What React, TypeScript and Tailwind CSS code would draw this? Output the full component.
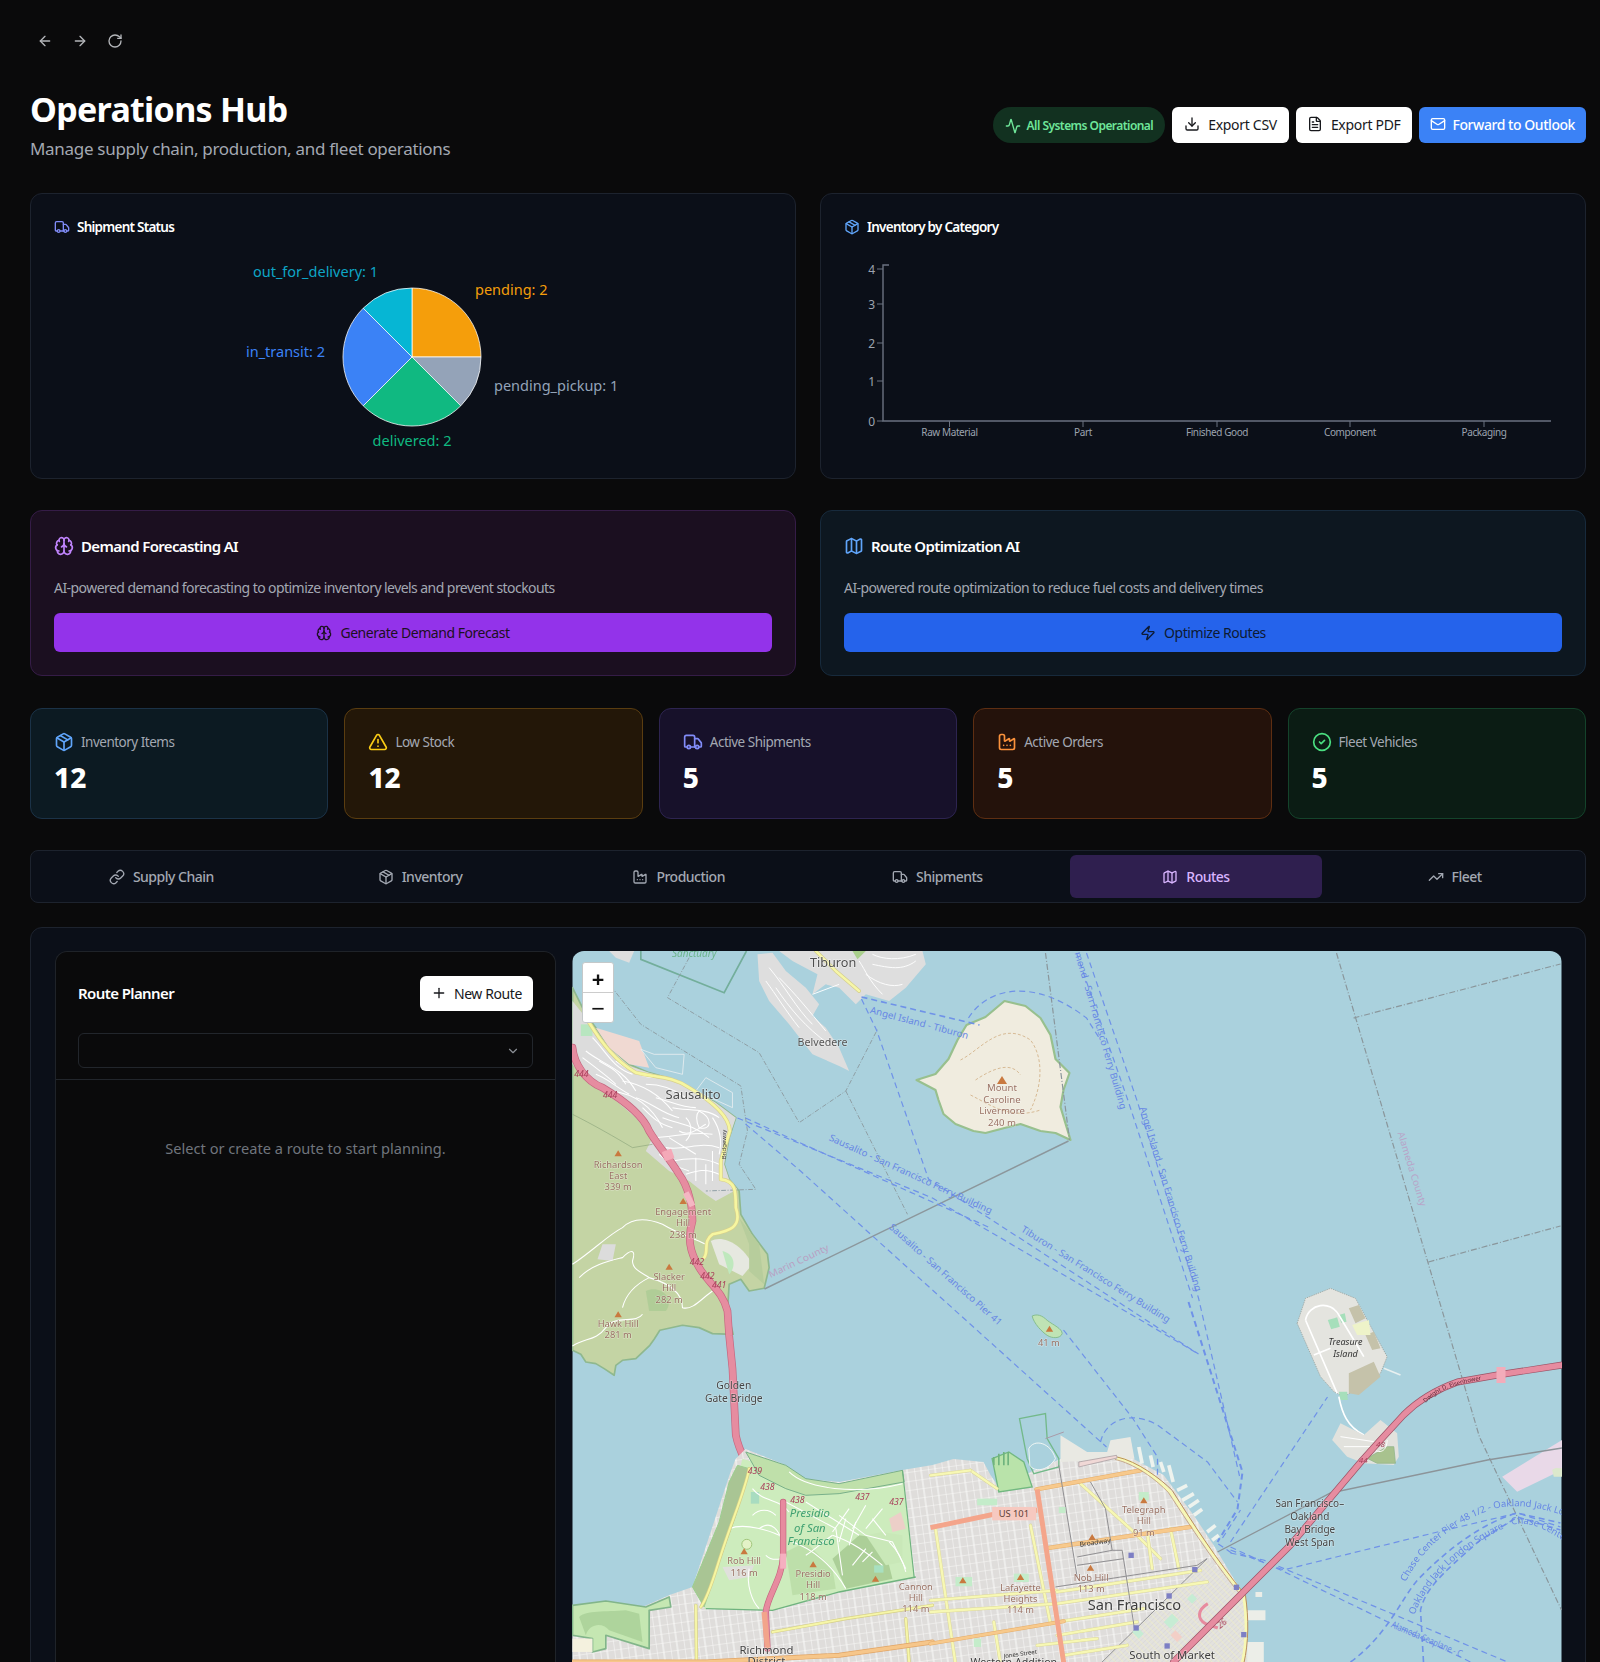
import type { ReactNode } from 'react';
import {
  Activity, ArrowLeft, ArrowRight, Brain, ChevronDown, CircleCheck, Download, Factory, FileText,
  Link as LinkIcon, Mail, Map as MapIcon, Package, Plus, RotateCw, TrendingUp, TriangleAlert, Truck, Zap,
} from 'lucide-react';

const Z7 = 'translate(572 951) scale(.3333)';
const Z8 = 'translate(572 1302) scale(.3333)';
const Z9 = 'translate(930 1302) scale(.3333)';
const Z10 = 'translate(1230 1260) scale(.3333)';

function Road({ d, w, color, casing, edge = 4 }: { d: string; w: number; color: string; casing?: string; edge?: number }) {
  return (
    <>
      {casing && <path d={d} fill="none" stroke={casing} strokeWidth={w + edge} strokeLinecap="round" strokeLinejoin="round" />}
      <path d={d} fill="none" stroke={color} strokeWidth={w} strokeLinecap="round" strokeLinejoin="round" />
    </>
  );
}

function Label({ x, y, s = 28, fill = '#9a7264', italic, lines, step = 34 }: { x: number; y: number; s?: number; fill?: string; italic?: boolean; lines: string[]; step?: number }) {
  return (
    <>
      {lines.map((t, i) => (
        <text key={t + i} x={x} y={y + i * step} fontSize={s} fill={fill} fontStyle={italic ? 'italic' : undefined} textAnchor="middle" stroke="rgba(255,255,255,.4)" strokeWidth={s / 9} paintOrder="stroke">
          {t}
        </text>
      ))}
    </>
  );
}

function Ferry({ x1, y1, x2, y2, children, color = '#6787e4' }: { x1: number; y1: number; x2: number; y2: number; children: string; color?: string }) {
  const angle = (Math.atan2(y2 - y1, x2 - x1) * 180) / Math.PI;
  const len = Math.hypot(x2 - x1, y2 - y1);
  return (
    <text x={x1} y={y1} transform={`rotate(${angle} ${x1} ${y1})`} fontSize="9.5" fill={color} textLength={len} lengthAdjust="spacingAndGlyphs">
      {children}
    </text>
  );
}

function Peak({ x, y }: { x: number; y: number }) {
  return <path d={`M${x - 11},${y + 9} L${x},${y - 9} L${x + 11},${y + 9} Z`} fill="#c9793f" />;
}

const marinStreets = [
  'M60,260 C100,300 120,350 180,370', 'M40,300 C90,340 150,350 190,420', 'M150,390 C210,400 260,430 300,480', 'M120,420 C190,430 240,470 270,530',
  'M300,470 C340,480 400,470 440,500', 'M270,500 C320,520 360,520 410,560', 'M240,560 C300,560 350,540 420,550', 'M280,590 C340,600 380,570 440,590',
  'M300,630 C350,620 400,620 440,640', 'M340,670 C370,660 400,650 440,670', 'M380,480 C420,500 420,540 380,530 C370,510 370,490 380,480', 'M220,400 C260,400 300,410 340,440',
  'M400,640 L400,700', 'M420,600 L420,690', 'M370,620 L370,690', 'M30,320 C70,350 110,380 130,400', 'M80,330 C110,350 130,350 160,400', 'M190,440 C230,450 270,490 320,500',
  'M250,440 C290,450 330,470 370,470', 'M210,470 C240,500 260,520 300,530', 'M320,540 C350,560 380,530 400,520', 'M260,610 C290,640 320,650 350,660', 'M290,560 C320,580 340,590 370,610',
  'M340,500 C360,520 360,550 340,570', 'M420,500 C440,530 450,570 440,610', 'M70,370 C100,380 120,400 170,430', 'M130,330 C170,360 210,380 250,380',
];
const hillTrails = [
  'M0,940 C60,900 110,850 150,830 C180,800 220,800 270,820 C320,850 360,860 400,880',
  'M20,980 C60,940 110,930 150,920 C180,890 190,900 180,930 C180,960 220,970 230,980 C190,1000 160,1030 150,1070',
  'M230,980 C300,1000 330,1030 330,1070 C360,1080 390,1040 420,1020',
  'M0,1185 C40,1160 70,1170 100,1130 C130,1090 190,1120 210,1090',
];
const presidioStreets = [
  'M540,560 C570,600 620,590 650,630', 'M560,680 C600,650 620,690 630,720', 'M640,600 L790,680 L810,820', 'M700,600 L860,700', 'M800,640 L880,700 L960,720 L1000,800',
  'M780,700 C840,720 880,750 930,790', 'M830,620 L780,690', 'M880,610 L840,680', 'M930,620 L880,680', 'M660,720 C720,740 780,790 820,860', 'M530,800 C520,850 540,900 560,920',
  'M580,760 C600,780 620,770 630,770', 'M470,680 C520,660 600,690 620,700', 'M650,510 C700,560 850,580 990,545', 'M820,650 L800,720', 'M850,660 L830,730', 'M900,650 L940,700',
  'M700,760 C730,740 750,720 780,700', 'M840,790 L880,740', 'M870,780 L900,750', 'M950,720 C970,740 990,770 1000,810', 'M540,640 C560,620 590,620 610,640',
];
const belvedereStreets = ['M590,50 C640,110 670,170 720,220', 'M610,110 C650,170 700,230 770,280', 'M620,80 C670,130 710,180 760,240', 'M580,90 C610,130 640,180 680,230', 'M720,130 L800,100', 'M900,40 C950,50 990,60 1030,30', 'M880,70 C920,100 960,110 990,100', 'M900,10 C930,25 980,30 1030,10', 'M860,30 C880,60 890,90 930,130'];

function MapArt() {
  return (
    <svg viewBox="572 951 989 711" className="block h-full w-full blur-[0.5px] font-['Noto_Sans']">
      <defs>
        <pattern id="citygrid" patternUnits="userSpaceOnUse" width="14" height="9" patternTransform="rotate(-8)">
          <rect width="14" height="9" fill="#dfdddb" />
          <path d="M0,0H14M0,0V9M7,0V9" stroke="#fafaf8" strokeWidth="1.1" />
        </pattern>
        <pattern id="somagrid" patternUnits="userSpaceOnUse" width="16" height="10" patternTransform="rotate(-44)">
          <rect width="16" height="10" fill="#dcdad8" />
          <path d="M0,0H16M0,5H16" stroke="#fbfbf0" strokeWidth="1.2" />
          <path d="M0,0V10" stroke="#f7f7b8" strokeWidth="2" />
        </pattern>
      </defs>
      <rect x="572" y="951" width="989" height="711" fill="#aad1dd" />

      {/* marin side */}
      <g transform={Z7}>
        <path d="M0,110 L40,190 L70,230 L110,290 L170,340 L230,365 L300,385 L370,420 L430,455 L490,500 L470,560 L455,640 L470,685 L500,720 L505,790 L540,850 L585,910 L590,950 L575,1012 L530,1020 L505,985 L470,1000 L465,1080 L482,1150 L420,1148 L380,1130 L330,1123 L262,1138 L245,1165 L232,1183 L190,1223 L150,1228 L130,1243 L125,1273 L95,1253 L70,1238 L40,1233 L25,1210 L0,1198 Z" fill="#c4d4a4" stroke="#8fb88e" strokeWidth="5" strokeLinejoin="round" />
        <path d="M0,150 L40,200 L110,290 L170,345 L230,365 L300,385 L370,420 L430,455 L490,500 L470,560 L455,640 L470,685 L495,715 L430,750 L400,730 L350,690 L290,660 L220,600 L240,560 L190,500 L120,440 L50,400 L0,340 Z" fill="#dcdcdc" />
        <path d="M70,230 L200,270 L230,350 L170,340 L110,290 Z" fill="#f0d9d2" />
        <path d="M25,220 h35 v35 h-35 Z" fill="#b8e6c0" />
        <path d="M205,295 L250,350 L330,370 L335,310 L245,310 Z" fill="#aad1dd" stroke="#e8eef0" strokeWidth="2.5" />
        <path d="M370,420 L400,380 L480,425 L480,470 Z" fill="#aad1dd" stroke="#e8eef0" strokeWidth="2.5" />
        <path d="M415,870 C450,850 510,880 540,940 L510,975 L440,940 Z" fill="#e6e8e0" />
        <path d="M450,900 C490,910 490,950 470,970 Z" fill="#bfe8bd" />
        <path d="M220,1020 C260,1000 310,1040 280,1080 L230,1080 Z" fill="#a8cb92" opacity=".7" />
        <path d="M90,880 L130,880 L120,930 L75,925 Z" fill="#dcdcdc" />
        <path d="M500,800 L560,880 L575,1000 L530,960 L530,880 Z" fill="#b7cd9c" />
        {marinStreets.map((d) => <path key={d} d={d} fill="none" stroke="#fff" strokeWidth="3.2" />)}
        {hillTrails.map((d) => <path key={d} d={d} fill="none" stroke="#fff" strokeWidth="3.2" />)}
        <path d="M0,490 C60,520 130,560 180,590 L240,580" fill="none" stroke="#87a077" strokeWidth="2.5" opacity=".7" />

        {/* belvedere and tiburon */}
        <path d="M555,10 L600,5 L640,60 L700,110 L740,160 L720,195 L760,230 L800,290 L830,360 L800,345 L720,310 L650,220 L590,150 L560,90 Z" fill="#dedede" />
        <path d="M620,0 L1050,0 L1060,40 L1000,110 L950,150 L880,130 L850,160 L800,110 L760,100 L720,130 L735,70 L660,30 Z" fill="#dedede" />
        <path d="M110,0 H185 L170,35 L130,20 Z" fill="#dedede" />
        <path d="M840,0 H880 L855,25 Z" fill="#a9cf8c" />
        {belvedereStreets.map((d) => <path key={d} d={d} fill="none" stroke="#fff" strokeWidth="2.8" />)}
        <Road d="M730,0 L790,60 L860,120" w={7} color="#f6f6a8" casing="#d4cd8d" />
        <path d="M205,0 L205,25 L455,125 L522,0" fill="none" stroke="#73ae9b" strokeWidth="5" />
        <path d="M350,20 L285,140 L560,305 L680,515 L820,420 L915,235 M820,420 L1005,790 M115,105 L205,220 L505,405 L525,540 L500,640 L550,715 L400,720" fill="none" stroke="#8f9fa5" strokeWidth="3" strokeDasharray="14 5 3 5" />

        <Road d="M50,215 C90,280 130,330 190,365 C250,380 300,375 350,410 C400,440 470,490 472,540 L445,630 L445,685 C490,690 490,720 490,770 C510,830 470,840 420,850 C390,870 410,900 395,920" w={8} color="#f6f6a0" casing="#d8d08c" />
        <Road d="M0,290 C5,340 40,390 90,410 C140,440 210,490 230,540 C260,590 290,620 320,670 C350,710 360,770 360,810 C345,860 350,900 380,950 C410,1000 450,1020 465,1080 L470,1153 L480,1253 L490,1453 C500,1500 530,1560 560,1583 C600,1615 640,1633 720,1658 C760,1668 800,1660 860,1638 C900,1622 940,1628 960,1638 C990,1660 1010,1700 1050,1725 L1090,1725" w={19} color="#e68ca0" casing="#c4667f" />
        <rect x="272" y="597" width="30" height="30" rx="3" fill="#f4a9b8" transform="rotate(-20 287 612)" />
        <path d="M340,725 L360,765" stroke="#f4b6c2" strokeWidth="18" />
      </g>

      {/* land around the presidio and the city */}
      <path d="M572,1662 L572,1605 L605,1602 L642,1607 L669,1595 L692,1587 L729,1475 L735,1459 L745,1449 L785,1465 L805,1479 L839,1482 L902,1470 L932,1465 L953,1459 L983,1462 L990,1475 L1000,1490 L1030,1472 L1060,1459 L1110,1452 L1117,1439 L1130,1439 L1133,1459 L1163,1475 L1193,1515 L1213,1545 L1243,1595 L1247,1662 Z" fill="url(#citygrid)" />
      <g transform={Z8}>
        <path d="M395,920 L430,780 L470,620 L510,470 L640,510 L720,560 L990,510 L1025,825 L800,870 L600,925 Z" fill="#cdecbd" />
        <path d="M360,855 L440,660 L470,540 L495,490 L530,500 L490,640 L440,780 L395,915 Z" fill="#a9c594" stroke="#9bcf8f" strokeWidth="3" />
        <path d="M520,450 L640,490 L700,530 L800,545 L990,505 L995,540 L800,575 L700,580 L640,560 L560,520 Z" fill="#bfe0aa" stroke="#78b08a" strokeWidth="3" />
        <path d="M780,770 L860,700 L930,710 L960,830 L820,860 Z" fill="#a6ca92" opacity=".85" />
        <path d="M640,750 L700,720 L780,800 L790,860 L660,880 Z" fill="#b9dca5" opacity=".8" />
        <path d="M880,700 L930,690 L990,700 L990,780 L940,790 Z" fill="#c9e8b8" />
        <path d="M950,650 L985,630 L1000,680 L960,690 Z" fill="#eccfc8" />
        <path d="M905,790 h28 v22 h-28 Z" fill="#a8e0c0" />
        <path d="M535,570 h25 v35 h-25 Z" fill="#a8dcc0" />
        <path d="M0,910 L100,897 L220,915 L290,885 L295,915 L230,925 L230,1040 L100,1000 L100,1040 L60,1050 L60,1010 L0,1000 Z" fill="#c5e7b2" stroke="#82b58a" strokeWidth="5" strokeLinejoin="round" />
        <path d="M20,945 C40,925 100,930 160,925 L200,935 L210,1020 L110,985 C90,960 50,965 40,1000 Z" fill="#a7cf96" opacity=".8" />
        <path d="M0,1010 H60 V1050 H0 Z" fill="#f4f1de" />
        <circle cx="523" cy="727" r="15" fill="#e3f2c7" stroke="#a1c57b" strokeWidth="3" />
        <path d="M450,795 L545,790 L530,825 L470,835 Z" fill="#e0e0dc" />
        {presidioStreets.map((d) => <path key={d} d={d} fill="none" stroke="#fff" strokeWidth="3.2" />)}
        <path d="M400,920 L600,925 L800,870 L1030,825" fill="none" stroke="#6fb37e" strokeWidth="4" />
        <path d="M990,505 L1025,825" fill="none" stroke="#6fb37e" strokeWidth="3.5" />
        <Road d="M530,500 C520,560 480,650 445,760 C425,820 410,880 385,915" w={6} color="#f6f6a0" casing="#d5cf88" />
        <Road d="M370,910 L372,1080" w={6} color="#f6f6a8" casing="#d5cf88" />
        <Road d="M600,990 L820,950 L1080,910" w={6} color="#f6f6a8" casing="#d5cf88" />
        <Road d="M1000,950 L1010,1080" w={6} color="#f6f6a8" casing="#d5cf88" />
        <Road d="M0,1080 L400,1080 L800,1060 L1080,1020" w={11} color="#f6c68a" casing="#e1a566" />
        <Road d="M632,600 L632,760 C630,830 585,880 580,930 L585,1040" w={15} color="#e78b9f" casing="#c4667f" />
        <path d="M632,755 L632,800" stroke="#f5b0c0" strokeWidth="18" />
        <path d="M575,930 L585,1040" stroke="#f2a48b" strokeWidth="16" />
      </g>
      <g transform={Z9}>
        {/* fort mason */}
        <path d="M185,470 L235,450 L280,480 L305,555 L205,570 Z" fill="#b9e3aa" stroke="#72b881" strokeWidth="4" />
        <path d="M190,465 L190,490 M205,455 L205,490 M220,450 L220,490 M233,450 L233,490" stroke="#6fb37e" strokeWidth="5" />
        <path d="M267,350 L345,335 L350,410 L385,470 L385,495 L310,515 L290,470 Z" fill="none" stroke="#73b98a" strokeWidth="4" />
        <path d="M295,440 C310,410 360,420 375,470 C350,510 310,510 298,490 Z" fill="#aad1dd" stroke="#f0f6f4" strokeWidth="3" />
        <path d="M345,410 L400,390" stroke="#a99aa8" strokeWidth="3" />
        <path d="M390,400 L470,450 L530,450 L540,415 L600,405 L612,470 L390,480 Z" fill="#e9e9e3" />
        {['M625,435 L635,485', 'M660,460 L668,495', 'M690,480 L700,510', 'M715,490 L728,540', 'M740,565 L770,550', 'M755,595 L790,575', 'M775,615 L805,595', 'M790,640 L815,622', 'M830,690 L855,670', 'M845,715 L865,700'].map((d) => <path key={d} d={d} stroke="#eef3ee" strokeWidth="11" />)}
        <path d="M950,925 H1005 V955 H950 Z M950,1020 H1000 V1080 H950 Z" fill="#eceee8" />
        <path d="M975,870 H995 V885 H975 Z" fill="#eceee8" />
        {/* SoMa */}
        <path d="M510,1085 L830,770 L945,880 L950,1085 Z" fill="url(#somagrid)" />
        <path d="M510,1085 L830,770" stroke="#8f8f92" strokeWidth="3" />
        <path d="M700,960 l25,-25 l20,20 l-25,25 Z M620,975 l20,20 l-15,15 l-20,-20 Z M770,890 l15,-15 l15,15 l-15,15 Z" fill="#c6ecd4" />
        <path d="M720,1000 l15,-15 l20,20 l-15,15 Z" fill="#f3cfc7" />

        {/* yellow streets */}
        {['M15,680 L75,1085', 'M300,670 L360,965', 'M120,505 L200,560', 'M0,520 L120,505', 'M450,545 L610,690 L690,770', 'M0,895 L380,865', 'M0,930 L380,905', 'M380,870 L810,805', 'M380,905 L830,840', 'M190,960 L210,1085', 'M380,960 L640,920', 'M380,1000 L620,960', 'M650,690 L665,800', 'M720,680 L745,800', 'M320,1030 L500,1010', 'M400,1060 L590,1030'].map((d) => (
          <Road key={d} d={d} w={7} color="#f7f8b4" casing="#dcd79b" edge={3} />
        ))}
        {/* orange streets */}
        <Road d="M318,562 L630,505" w={10} color="#f7c98c" casing="#e4ac69" edge={3} />
        <Road d="M355,738 L780,675" w={10} color="#f7c98c" casing="#e4ac69" edge={3} />
        <Road d="M0,1025 L340,968 L400,958" w={9} color="#f7c98c" casing="#e4ac69" edge={3} />
        {/* van ness and lombard */}
        <path d="M320,562 L400,1085" stroke="#f4a58b" strokeWidth="15" fill="none" />
        <path d="M0,677 L190,637 L320,625" stroke="#f4a58b" strokeWidth="15" fill="none" />
        <rect x="185" y="615" width="132" height="40" fill="#f6c9c0" />
        <text x="250" y="645" fontSize="28" fill="#5d4037" textAnchor="middle">US 101</text>

        {/* embarcadero */}
        <path d="M560,468 C620,480 680,530 720,570 C780,660 850,770 940,880 C950,950 950,1020 935,1085" fill="none" stroke="#f7f8b4" strokeWidth="9" />
        <path d="M560,465 C620,478 690,530 725,565 C785,660 855,770 945,880 C955,950 955,1020 940,1085" fill="none" stroke="#b98f5b" strokeWidth="3" />
        <path d="M553,472 C615,486 680,535 714,572 C775,665 845,775 934,884" fill="none" stroke="#b98f5b" strokeWidth="2" />
        <path d="M445,480 L445,495 L560,468 L558,460 Z" fill="#f0d8d6" stroke="#9d9297" strokeWidth="2" />

        {/* trams */}
        <path d="M385,490 L440,825 M480,540 L525,620 L545,745 L440,765 M575,745 L612,980 M545,745 H575 M375,855 L800,790 L830,770 M440,790 L580,770" fill="none" stroke="#908f92" strokeWidth="3" />

        {['M140,610 h60 v-20 h-60 Z', 'M625,570 h30 v25 h-30 Z', 'M75,825 h50 v28 h-50 Z', 'M250,815 h45 v25 h-45 Z', 'M130,1010 h22 v25 h-22 Z', 'M385,615 h20 v18 h-20 Z'].map((d) => <path key={d} d={d} fill="#c4ecca" />)}
        {[[602, 760], [793, 803], [918, 856], [716, 882], [617, 978], [710, 1032], [940, 998]].map(([x, y]) => (
          <rect key={x} x={x - 8} y={y - 8} width="16" height="16" fill="#7d7fc4" />
        ))}

        {/* bay bridge ramp */}
        <path d="M832,905 C800,925 800,950 825,965 L862,978" fill="none" stroke="#e78b9f" strokeWidth="9" />
        {[[640, 595], [485, 705], [480, 797], [270, 825], [97, 835], [-165, 830]].map(([x, y]) => <Peak key={x} x={x} y={y} />)}
      </g>

      {/* alcatraz */}
      <g transform={Z9}>
        <path d="M305,42 C320,35 335,40 350,55 C370,70 395,80 395,95 C390,110 365,110 350,100 C335,90 310,65 305,42 Z" fill="#bfe3b4" stroke="#86bd8f" strokeWidth="3" />
        <Peak x={357} y={80} />
      </g>

      {/* angel island */}
      <path d="M916,1080 L935,1074 L948,1059 L957,1040 L966,1025 L985,1017 L1004,1001 L1025,1006 L1040,1018 L1050,1035 L1055,1059 L1069,1073 L1063,1090 L1060,1107 L1070,1140 L1055,1133 L1040,1131 L1020,1124 L1004,1128 L985,1133 L973,1131 L955,1124 L943,1114 L938,1100 L935,1090 Z" fill="#f0ecdf" stroke="#98c08e" strokeWidth="2.2" strokeLinejoin="round" />
      <path d="M960,1060 C980,1050 1000,1020 1030,1040 C1045,1060 1040,1090 1030,1110 M970,1095 C990,1105 1010,1120 1040,1110 M975,1080 C990,1070 1010,1060 1020,1075" fill="none" stroke="#d4b48c" strokeWidth=".9" strokeDasharray="3 2" />
      <path d="M996.5,1084 L1001.5,1076 L1006.5,1084 Z" fill="#c9793f" />

      {/* treasure island and yerba buena */}
      <g transform={Z10}>
        <path d="M200,190 L225,115 L300,85 L375,115 L470,290 L450,340 L410,370 L340,410 L310,395 L270,350 Z" fill="#e4e4df" stroke="#9aa29e" strokeWidth="2.5" strokeDasharray="4 3" />
        <path d="M355,145 L385,135 L405,175 L375,190 Z M405,225 L430,215 L450,265 L425,270 Z M355,340 L430,305 L450,350 L385,405 L355,400 Z" fill="#c5c2aa" />
        <path d="M292,180 L320,172 L328,200 L302,208 Z M325,165 L343,160 L348,185 L332,188 Z M325,395 L350,395 L352,420 L330,420 Z" fill="#a6dfbb" />
        <path d="M365,195 L415,180 L420,225 L380,225 Z" fill="#eef3c9" />
        <path d="M225,180 C235,130 300,120 325,165 L400,290 M225,180 L320,400 M250,285 L300,265 M325,410 C335,460 350,500 400,525" fill="none" stroke="#fff" strokeWidth="5" />
        <path d="M460,325 L510,345" stroke="#e8f0f0" strokeWidth="5" />
        <path d="M305,540 L330,490 L400,525 L450,480 L500,520 L505,590 L490,615 L400,610 L350,590 Z" fill="#e2e2dd" />
        <path d="M410,595 L470,560 L490,560 L495,610 L440,610 Z" fill="#a8c28e" stroke="#8ab085" strokeWidth="2" />
        <path d="M330,530 L430,545 M340,560 L420,560 M430,570 C460,585 470,560 470,540" fill="none" stroke="#fff" strokeWidth="3" />
        <path d="M815,650 L995,540 L995,630 L860,695 Z" fill="#e9d9e8" />
        <path d="M965,630 C975,620 985,625 995,625 V650 H970 Z" fill="#dce8cc" />
      </g>

      {/* boundaries */}
      <path d="M1045,953 L1069,1140 M1336,953 L1479,1437 L1561,1610 M1353,1018 L1560,964 M1428,1262 L1560,1226" fill="none" stroke="#8a969b" strokeWidth="1.2" strokeDasharray="6 2 1 2" />
      <path d="M1217,1552 L1330,1493 L1487,1460 L1562,1448" fill="none" stroke="#8c9499" strokeWidth="1.4" />
      <path d="M764,1289 L1068,1141" fill="none" stroke="#8c979c" strokeWidth="1.4" />

      {/* ferries */}
      <g fill="none" stroke="#6f92e8" strokeWidth="1.2" strokeDasharray="6 4">
        <path d="M861,997 L979,1025" strokeWidth="1.6" />
        <path d="M968,1018 C985,990 1030,975 1086,1018 L1100,1040" />
        <path d="M861,999 L876,1030 L928,1179 L1198,1354" />
        <path d="M1086,953 L1137,1102 L1198,1298 L1239,1476" />
        <path d="M1076,953 L1128,1102 L1192,1298" />
        <path d="M737,1118 L932,1198 L1198,1354" />
        <path d="M745,1124 L800,1171 L1106,1447" />
        <path d="M745,1118 L800,1143 L990,1228" />
        <path d="M1063,1330 L1132,1418 L1157,1457 L1157,1475" />
        <path d="M1100,1442 C1105,1420 1130,1410 1157,1425 L1207,1462 L1237,1502" />
        <path d="M1188,1302 L1207,1362 L1242,1472 L1237,1509 L1217,1542" strokeWidth="2" />
        <path d="M1230,1542 L1327,1397" />
        <path d="M1222,1538 L1240,1510" />
        <path d="M1230,1550 L1283,1570 L1437,1532 L1517,1513 L1560,1527" />
        <path d="M1350,1662 C1387,1635 1400,1600 1417,1580 C1443,1553 1480,1523 1517,1513 L1560,1523" strokeWidth="1.6" />
        <path d="M1423,1662 L1420,1610 C1425,1590 1437,1577 1480,1540 L1517,1517 L1560,1530" strokeWidth="1.6" />
        <path d="M1230,1553 L1263,1560 L1507,1662" />
        <path d="M1230,1547 L1280,1570 L1470,1662" />
        <path d="M1231,1553 L1215,1542" />
      </g>

      <Ferry x1={869} y1={1013} x2={967} y2={1039}>Angel Island - Tiburon</Ferry>
      <Ferry x1={1074} y1={953} x2={1120} y2={1110}>mond - San Francisco Ferry Building</Ferry>
      <Ferry x1={1139} y1={1108} x2={1195} y2={1292}>Angel Island - San Francisco Ferry Building</Ferry>
      <Ferry x1={828} y1={1140} x2={990} y2={1214}>Sausalito - San Francisco Ferry Building</Ferry>
      <Ferry x1={1020} y1={1231} x2={1167} y2={1323}>Tiburon - San Francisco Ferry Building</Ferry>
      <Ferry x1={888} y1={1228} x2={998} y2={1326}>Sausalito - San Francisco Pier 41</Ferry>
      <Ferry x1={1397} y1={1133} x2={1420} y2={1207} color="#b8a4c8">Alameda County</Ferry>
      <Ferry x1={770} y1={1278} x2={829} y2={1250} color="#b99fc2">Marin County</Ferry>
      <Ferry x1={1390} y1={1627} x2={1460} y2={1657}>Alameda Seaplane - C</Ferry>
      <path id="chaseA" d="M1405,1582 C1425,1545 1450,1525 1490,1510 C1515,1502 1540,1508 1562,1515" fill="none" />
      <path id="chaseB" d="M1414,1615 C1425,1585 1455,1550 1510,1525 C1530,1520 1545,1530 1562,1540" fill="none" />
      <text fontSize="9.5" fill="#6787e4"><textPath href="#chaseA">Chase Center Pier 48 1/2 - Oakland Jack London</textPath></text>
      <text fontSize="9.5" fill="#6787e4"><textPath href="#chaseB">Oakland Jack London Square - Chase Center</textPath></text>

      {/* bay bridge */}
      <Road d="M1173,1662 L1290,1545 L1362,1460 L1380,1440 L1403,1415 C1420,1398 1440,1388 1457,1382 L1497,1375 L1562,1365" w={5.5} color="#e68ca0" casing="#9b5366" edge={1.4} />
      <rect x="1496" y="1367" width="9" height="16" fill="#f2acba" />
      <path id="dde" d="M1425,1403 C1440,1388 1455,1384 1497,1377" fill="none" />
      <text fontSize="6" fill="#5e2a39"><textPath href="#dde">Dwight D. Eisenhower</textPath></text>

      {/* labels */}
      <g transform={Z7}>
        <text x="365" y="18" fontSize="30" fontStyle="italic" fill="#6db58d" textAnchor="middle">Sanctuary</text>
        <Label x={782} y={47} s={38} fill="#4e4e4e" lines={['Tiburon']} />
        <Label x={750} y={286} s={32} fill="#555" lines={['Belvedere']} />
        <Label x={362} y={445} s={39} fill="#4e4e4e" lines={['Sausalito']} />
        <Peak x={137} y={607} />
        <Peak x={332} y={750} />
        <Peak x={290} y={947} />
        <Peak x={137} y={1090} />
        <Label x={137} y={650} lines={['Richardson', 'East', '339 m']} />
        <Label x={332} y={792} lines={['Engagement', 'Hill', '238 m']} />
        <Label x={290} y={987} lines={['Slacker', 'Hill', '282 m']} />
        <Label x={137} y={1127} lines={['Hawk Hill', '281 m']} />
        {[[27, 378, '444'], [113, 442, '444'], [373, 943, '442'], [405, 985, '442'], [440, 1010, '441']].map(([x, y, t]) => (
          <text key={`${x}`} x={x} y={y} fontSize="26" fontStyle="italic" fill="#a83f5a" textAnchor="middle">{t}</text>
        ))}
        <text x="462" y="625" fontSize="18" fill="#444" transform="rotate(-90 462 625)">Bridgeway</text>
      </g>
      <g transform={Z8}>
        <Label x={484} y={262} s={31} fill="#444" lines={['Golden', 'Gate Bridge']} step={38} />
        <Peak x={515} y={748} />
        <Peak x={722} y={787} />
        <Label x={515} y={787} lines={['Rob Hill', '116 m']} />
        <Label x={722} y={825} lines={['Presidio', 'Hill', '118 m']} />
        <Label x={1030} y={865} lines={['Cannon', 'Hill', '114 m']} step={33} />
        <text fontSize="34" fontStyle="italic" fill="#3fa071" textAnchor="middle">
          <tspan x="712" y="645">Presidio</tspan>
          <tspan x="712" y="690">of San</tspan>
          <tspan x="716" y="730">Francisco</tspan>
        </text>
        {[[547, 517, '439'], [585, 565, '438'], [675, 602, '438'], [870, 595, '437'], [972, 608, '437']].map(([x, y, t]) => (
          <text key={`${x}`} x={x} y={y} fontSize="26" fontStyle="italic" fill="#a83f5a" textAnchor="middle">{t}</text>
        ))}
        <Label x={582} y={1055} s={34} fill="#444" lines={['Richmond', 'District']} step={34} />
      </g>
      <g transform={Z9}>
        <Label x={355} y={131} lines={['41 m']} />
        <Label x={640} y={633} lines={['Telegraph', 'Hill', '91 m']} />
        <Label x={270} y={866} lines={['Lafayette', 'Heights', '114 m']} />
        <Label x={482} y={836} lines={['Nob Hill', '113 m']} />
        <Label x={612} y={925} s={44} fill="#3d3d3d" lines={['San Francisco']} />
        <Label x={725} y={1070} s={34} fill="#3d3d3d" lines={['South of Market']} />
        <Label x={250} y={1092} s={32} fill="#3d3d3d" lines={['Western Addition']} />
        <text x="495" y="728" fontSize="20" fill="#333" textAnchor="middle" transform="rotate(-8 495 728)">Broadway</text>
        <text x="270" y="1062" fontSize="18" fill="#333" textAnchor="middle" transform="rotate(-8 270 1062)">Jones Street</text>
        <text x="880" y="972" fontSize="26" fontStyle="italic" fill="#a83f5a" textAnchor="middle" transform="rotate(-40 880 972)">26</text>
      </g>
      <g transform={Z10}>
        <Label x={238} y={740} s={30} fill="#444" lines={['San Francisco–', 'Oakland', 'Bay Bridge', 'West Span']} step={39} />
        <text fontSize="27" fontStyle="italic" fill="#333" textAnchor="middle">
          <tspan x="345" y="255">Treasure</tspan>
          <tspan x="345" y="290">Island</tspan>
        </text>
        <text x="450" y="560" fontSize="24" fontStyle="italic" fill="#a83f5a" textAnchor="middle">48</text>
        <text x="398" y="608" fontSize="24" fontStyle="italic" fill="#a83f5a" textAnchor="middle">44</text>
      </g>
      <Label x={1001.5} y={1091} s={9.6} lines={['Mount', 'Caroline', 'Livermore', '240 m']} step={11.7} />
    </svg>
  );
}

function ChartCard({ icon, title, children }: { icon: ReactNode; title: string; children: ReactNode }) {
  return (
    <div className="h-[286px] rounded-xl border border-[#1d232e] bg-[#0b0f18] px-[23px] pt-[23px] pb-6">
      <h3 className="flex h-[20px] items-center gap-[7px] text-[13.5px] font-semibold tracking-[-0.75px] text-white">
        {icon}
        {title}
      </h3>
      <div className="mt-[13px]">{children}</div>
    </div>
  );
}

function AiCard({ icon, title, text, cls, button }: { icon: ReactNode; title: string; text: string; cls: string; button: ReactNode }) {
  return (
    <div className={`h-[166px] rounded-xl border px-[23px] pt-[22px] pb-6 ${cls}`}>
      <h3 className="flex h-[26px] items-center gap-[7px] text-[15px] font-semibold tracking-[-0.65px] text-white">
        {icon}
        {title}
      </h3>
      <p className="mt-[19px] text-[14px] leading-[20px] tracking-[-0.56px] text-[#a3a8b2]">{text}</p>
      <div className="mt-[15px]">{button}</div>
    </div>
  );
}

function StatCard({ icon, label, value, cls }: { icon: ReactNode; label: string; value: string; cls: string }) {
  return (
    <div className={`h-[111px] rounded-xl border px-[23px] pt-[23px] ${cls}`}>
      <div className="flex h-[20px] items-center gap-[7px] text-[13.5px] tracking-[-0.5px] text-[#a3a8b2]">
        {icon}
        {label}
      </div>
      <p className="mt-[7px] text-[28px] leading-[36px] font-extrabold text-white">{value}</p>
    </div>
  );
}

function Tab({ icon, label, active }: { icon: ReactNode; label: string; active?: boolean }) {
  return (
    <div className={`flex h-[43px] items-center justify-center gap-2 rounded-md text-[14px] font-medium tracking-[-0.5px] ${active ? 'bg-[#2f1f4f] text-[#d8b4fe]' : 'text-[#a3a8b2]'}`}>
      {icon}
      {label}
    </div>
  );
}

function ShipmentPie() {
  return (
    <svg viewBox="54 250 718 205" className="block h-[205px] w-full font-['Noto_Sans'] text-[14.5px]">
      <path d="M412,357 L412,288 A69,69 0 0 1 481,357 Z" fill="#f59e0b" stroke="#fff" strokeOpacity=".75" />
      <path d="M412,357 L481,357 A69,69 0 0 1 460.8,405.8 Z" fill="#94a3b8" stroke="#fff" strokeOpacity=".75" />
      <path d="M412,357 L460.8,405.8 A69,69 0 0 1 363.2,405.8 Z" fill="#10b981" stroke="#fff" strokeOpacity=".75" />
      <path d="M412,357 L363.2,405.8 A69,69 0 0 1 363.2,308.2 Z" fill="#3b82f6" stroke="#fff" strokeOpacity=".75" />
      <path d="M412,357 L363.2,308.2 A69,69 0 0 1 412,288 Z" fill="#06b6d4" stroke="#fff" strokeOpacity=".75" />
      <text x="378" y="277" textAnchor="end" fill="#0ea5c6">out_for_delivery: 1</text>
      <text x="475" y="295" fill="#f59e0b">pending: 2</text>
      <text x="494" y="391" fill="#94a3b8">pending_pickup: 1</text>
      <text x="412" y="446" textAnchor="middle" fill="#10b981">delivered: 2</text>
      <text x="325" y="357" textAnchor="end" fill="#3b82f6">in_transit: 2</text>
    </svg>
  );
}

function InventoryBars() {
  const yTicks = [[4, 269], [3, 304], [2, 343], [1, 381], [0, 421]] as const;
  const xTicks = [['Raw Material', 949.5], ['Part', 1083], ['Finished Good', 1217], ['Component', 1350], ['Packaging', 1484]] as const;
  return (
    <svg viewBox="844 250 718 205" className="block h-[205px] w-full font-['Noto_Sans']">
      <path d="M889,265 H883 V421 H1551" fill="none" stroke="#6b7280" strokeWidth="1.4" />
      {yTicks.map(([v, y]) => (
        <g key={v}>
          <path d={`M877,${y} H883`} stroke="#6b7280" />
          <text x="875" y={y + 5} textAnchor="end" fontSize="12" fill="#9ca3af">{v}</text>
        </g>
      ))}
      {xTicks.map(([t, x]) => (
        <g key={t}>
          <path d={`M${x},421 V427`} stroke="#6b7280" />
          <text x={x} y="436" textAnchor="middle" fontSize="10" letterSpacing="-0.4" fill="#9ca3af">{t}</text>
        </g>
      ))}
    </svg>
  );
}

export default function App() {
  return (
    <div className="h-[1662px] overflow-hidden bg-[#0a0a0b] pt-[33px] pr-[14px] pl-[30px] font-['Noto_Sans',sans-serif] text-white">
      <div className="flex h-[16px] items-center gap-[19px] pl-[7px] text-[#b4b6ba]">
        <ArrowLeft size={16} />
        <ArrowRight size={16} />
        <RotateCw size={16} />
      </div>

      <header className="mt-[38px] flex h-[85px] items-start justify-between">
        <div>
          <h1 className="text-[34px] leading-[44px] font-bold tracking-[-0.7px] text-white">Operations Hub</h1>
          <p className="mt-[6px] text-[17px] leading-[24px] tracking-[-0.3px] text-[#a3a8b2]">Manage supply chain, production, and fleet operations</p>
        </div>
        <div className="mt-[20px] flex items-center gap-[7px]">
          <span className="flex h-[36px] items-center gap-1.5 rounded-full bg-[#123120] px-[12px] pt-[2px] text-[12px] font-semibold tracking-[-0.55px] text-[#6fe69a]">
            <Activity size={16} />
            All Systems Operational
          </span>
          <button className="flex h-[36px] items-center gap-2 rounded-md bg-white px-[12px] pb-[2px] text-[14px] tracking-[-0.3px] text-[#17181c]">
            <Download size={16} />
            Export CSV
          </button>
          <button className="flex h-[36px] items-center gap-2 rounded-md bg-white px-[11px] pb-[2px] text-[14px] tracking-[-0.3px] text-[#17181c]">
            <FileText size={16} />
            Export PDF
          </button>
          <button className="flex h-[36px] items-center gap-[7px] rounded-md bg-[#3b82f6] px-[11px] pb-[2px] text-[14px] font-medium tracking-[-0.45px] text-white">
            <Mail size={16} />
            Forward to Outlook
          </button>
        </div>
      </header>

      <div className="mt-[21px] grid grid-cols-2 gap-6">
        <ChartCard icon={<Truck size={16} className="text-[#818cf8]" />} title="Shipment Status">
          <ShipmentPie />
        </ChartCard>
        <ChartCard icon={<Package size={16} className="text-[#60a5fa]" />} title="Inventory by Category">
          <InventoryBars />
        </ChartCard>
      </div>

      <div className="mt-[31px] grid grid-cols-2 gap-6">
        <AiCard
          cls="border-[#351c47] bg-[#1b0f20]"
          icon={<Brain size={20} className="text-[#c084fc]" />}
          title="Demand Forecasting AI"
          text="AI-powered demand forecasting to optimize inventory levels and prevent stockouts"
          button={
            <button className="flex h-[39px] w-full items-center justify-center gap-2 rounded-md bg-[#9333ea] text-[14px] tracking-[-0.45px] text-[#1c1022]">
              <Brain size={16} />
              Generate Demand Forecast
            </button>
          }
        />
        <AiCard
          cls="border-[#172a3c] bg-[#0d1720]"
          icon={<MapIcon size={20} className="text-[#60a5fa]" />}
          title="Route Optimization AI"
          text="AI-powered route optimization to reduce fuel costs and delivery times"
          button={
            <button className="flex h-[39px] w-full items-center justify-center gap-2 rounded-md bg-[#2563eb] text-[14px] tracking-[-0.45px] text-[#0d1a33]">
              <Zap size={16} />
              Optimize Routes
            </button>
          }
        />
      </div>

      <div className="mt-[32px] grid grid-cols-5 gap-4">
        <StatCard cls="border-[#1b3247] bg-[#0c1a22]" icon={<Package size={20} className="text-[#60a5fa]" />} label="Inventory Items" value="12" />
        <StatCard cls="border-[#5a3d10] bg-[#231708]" icon={<TriangleAlert size={20} className="text-[#facc15]" />} label="Low Stock" value="12" />
        <StatCard cls="border-[#2d2450] bg-[#17112a]" icon={<Truck size={20} className="text-[#818cf8]" />} label="Active Shipments" value="5" />
        <StatCard cls="border-[#5e2e12] bg-[#24120b]" icon={<Factory size={20} className="text-[#fb923c]" />} label="Active Orders" value="5" />
        <StatCard cls="border-[#14432b] bg-[#0b1c14]" icon={<CircleCheck size={20} className="text-[#4ade80]" />} label="Fleet Vehicles" value="5" />
      </div>

      <div className="mt-[31px] grid h-[53px] grid-cols-6 items-center gap-[6px] rounded-lg border border-[#1d232e] bg-[#0b0f18] px-[4px]">
        <Tab icon={<LinkIcon size={16} />} label="Supply Chain" />
        <Tab icon={<Package size={16} />} label="Inventory" />
        <Tab icon={<Factory size={16} />} label="Production" />
        <Tab icon={<Truck size={16} />} label="Shipments" />
        <Tab icon={<MapIcon size={16} />} label="Routes" active />
        <Tab icon={<TrendingUp size={16} />} label="Fleet" />
      </div>

      <div className="mt-[24px] h-[800px] rounded-xl border border-[#1d232e] bg-[#0b0f18] pt-[23px] pr-[23px] pl-6">
        <div className="flex h-[711px] gap-4">
          <aside className="w-[501px] shrink-0 rounded-xl rounded-b-none border border-b-0 border-[#1f2329] bg-[#0a0a0b]">
            <div className="border-b border-[#22262c] px-[22px] pt-6 pb-[11px]">
              <div className="flex h-[35px] items-center justify-between">
                <h3 className="text-[15px] font-semibold tracking-[-0.6px] text-white">Route Planner</h3>
                <button className="flex h-[35px] items-center gap-[7px] rounded-md bg-white px-[11px] pb-[1px] text-[14px] tracking-[-0.4px] text-[#17181c]">
                  <Plus size={16} />
                  New Route
                </button>
              </div>
              <div className="mt-[22px] flex h-[35px] items-center justify-end rounded-md border border-[#22262c] px-[12px] text-[#8b8f96]">
                <ChevronDown size={14} />
              </div>
            </div>
            <p className="mt-[57px] text-center text-[14.6px] leading-[22px] text-[#70757d]">Select or create a route to start planning.</p>
          </aside>
          <div className="relative min-w-0 flex-1 overflow-hidden rounded-t-xl">
            <MapArt />
            <div className="absolute top-[11px] left-[10px] flex w-[32px] flex-col rounded-[3px] border border-[#c4c8c9] bg-white text-[#111]">
              <span className="flex h-[30px] items-center justify-center border-b border-[#ccc] text-[22px] font-bold leading-none">+</span>
              <span className="flex h-[29px] items-center justify-center text-[24px] leading-none">−</span>
            </div>
          </div>
        </div>
      </div>
    </div>
  );
}
